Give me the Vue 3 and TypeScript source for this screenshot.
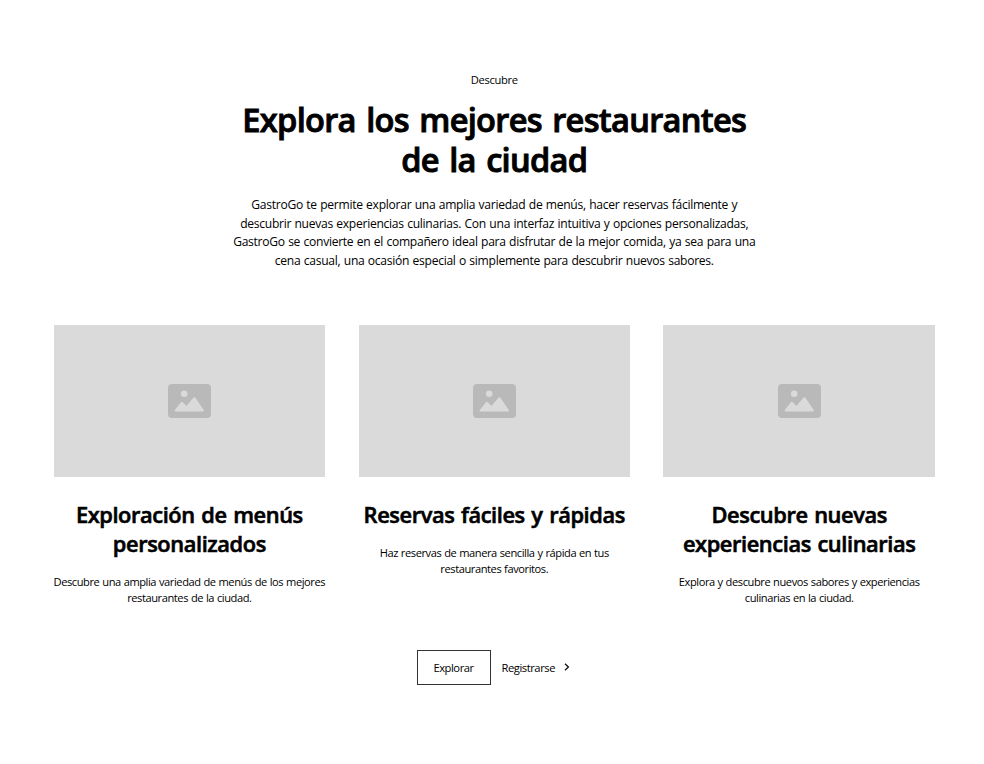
<script setup lang="ts">
interface Feature {
  title: string[]
  text: string[]
}

const headline: string[] = ['Explora los mejores restaurantes', 'de la ciudad']

const intro: string[] = [
  'GastroGo te permite explorar una amplia variedad de menús, hacer reservas fácilmente y',
  'descubrir nuevas experiencias culinarias. Con una interfaz intuitiva y opciones personalizadas,',
  'GastroGo se convierte en el compañero ideal para disfrutar de la mejor comida, ya sea para una',
  'cena casual, una ocasión especial o simplemente para descubrir nuevos sabores.',
]

const features: Feature[] = [
  {
    title: ['Exploración de menús', 'personalizados'],
    text: ['Descubre una amplia variedad de menús de los mejores', 'restaurantes de la ciudad.'],
  },
  {
    title: ['Reservas fáciles y rápidas'],
    text: ['Haz reservas de manera sencilla y rápida en tus', 'restaurantes favoritos.'],
  },
  {
    title: ['Descubre nuevas', 'experiencias culinarias'],
    text: ['Explora y descubre nuevos sabores y experiencias', 'culinarias en la ciudad.'],
  },
]
</script>

<template>
  <section class="page">
    <header class="intro">
      <p class="tagline">Descubre</p>
      <h1 class="headline">
        <span v-for="line in headline" :key="line" class="line">{{ line }}</span>
      </h1>
      <p class="lead">
        <span v-for="line in intro" :key="line" class="line">{{ line }}</span>
      </p>
    </header>

    <div class="features">
      <article v-for="feature in features" :key="feature.title[0]" class="feature">
        <div class="placeholder">
          <svg class="picture" viewBox="0 0 43 34" aria-hidden="true">
            <path
              fill="#b9b9b9"
              fill-rule="evenodd"
              d="M4 0H39Q43 0 43 4V30Q43 34 39 34H4Q0 34 0 30V4Q0 0 4 0ZM16.2 6.4A3.3 3.3 0 1 0 16.2 13A3.3 3.3 0 1 0 16.2 6.4ZM7.4 27.6H35.2Q36.6 27.4 35.8 26L27.4 13.7Q26.4 12.4 25.4 13.7L18.4 22L14.8 18.2Q13.8 17.2 12.9 18.2L6.8 25.9Q6.2 27.3 7.4 27.6Z"
            />
          </svg>
        </div>
        <h2 class="title">
          <span v-for="line in feature.title" :key="line" class="line">{{ line }}</span>
        </h2>
        <p class="text">
          <span v-for="line in feature.text" :key="line" class="line">{{ line }}</span>
        </p>
      </article>
    </div>

    <div class="actions">
      <button class="primary" type="button">Explorar</button>
      <button class="link" type="button">
        Registrarse
        <svg class="chevron" viewBox="0 0 6 8" aria-hidden="true">
          <path d="M1 0.8L4.4 4L1 7.2" fill="none" stroke="#111" stroke-width="1.3" />
        </svg>
      </button>
    </div>
  </section>
</template>

<style>
body {
  background: #fff;
}
</style>

<style scoped>
.page {
  box-sizing: border-box;
  height: 764px;
  padding: 71px 49.06px 0 53.6px;
  overflow: hidden;
  color: #000;
  font-family: 'Segoe UI', 'Open Sans', 'Noto Sans', sans-serif;
  text-align: center;
}

p,
h1,
h2 {
  margin: 0;
}

.line {
  display: block;
  white-space: nowrap;
}

.intro,
.feature {
  display: flex;
  flex-direction: column;
  align-items: center;
}

.tagline {
  font-size: 11.2px;
  line-height: 17px;
  letter-spacing: -0.35px;
}

.headline {
  margin-top: 12px;
  font-size: 32.6px;
  font-weight: 600;
  line-height: 40px;
  letter-spacing: -0.7px;
  word-spacing: 2.6px;
  -webkit-text-stroke: 0.9px #000;
}

.lead {
  margin-top: 16px;
  font-size: 12.1px;
  line-height: 18.7px;
  letter-spacing: -0.28px;
  word-spacing: 0.5px;
}

.features {
  display: grid;
  grid-template-columns: repeat(3, minmax(0, 1fr));
  gap: 33.42px;
  margin-top: 54.2px;
}

.placeholder {
  display: flex;
  align-items: center;
  justify-content: center;
  width: 100%;
  height: 152.4px;
  background: #dadada;
}

.picture {
  width: 43px;
  height: 34px;
}

.title {
  margin-top: 22.6px;
  font-size: 21.8px;
  font-weight: 600;
  line-height: 29px;
  letter-spacing: -0.4px;
  word-spacing: 1.3px;
  -webkit-text-stroke: 0.6px #000;
}

.text {
  margin-top: 15.8px;
  font-size: 11.1px;
  line-height: 16.6px;
  letter-spacing: -0.42px;
  word-spacing: 0.4px;
}

.actions {
  display: flex;
  align-items: center;
  justify-content: center;
  gap: 11px;
  margin-top: 42.8px;
  padding-right: 2px;
}

.primary,
.link {
  padding: 0;
  border: 0;
  background: none;
  color: #000;
  font: inherit;
  font-size: 11.2px;
  line-height: 17px;
  letter-spacing: -0.45px;
}

.primary {
  box-sizing: border-box;
  width: 74px;
  height: 35px;
  border: 1px solid #333;
}

.link {
  display: flex;
  align-items: center;
}

.chevron {
  width: 6px;
  height: 8px;
  margin-left: 9px;
}
</style>
